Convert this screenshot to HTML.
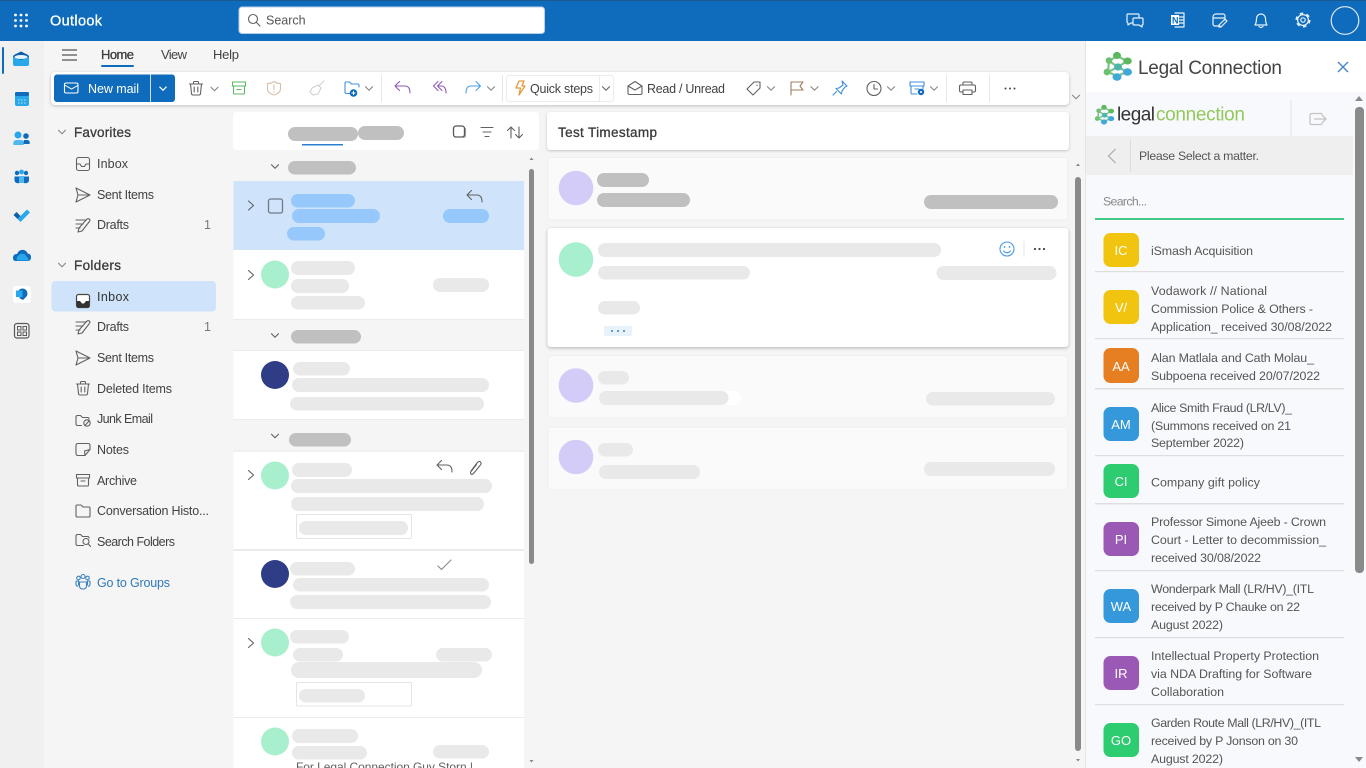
<!DOCTYPE html>
<html lang="en"><head><meta charset="utf-8"><title>Outlook</title>
<style>
html,body{margin:0;padding:0;width:1366px;height:768px;overflow:hidden;background:#f5f5f5}
svg.page{display:block;position:absolute;left:0;top:0;filter:blur(.35px)}
text{font-family:"Liberation Sans",sans-serif;font-size:12.5px;fill:#424242}
.s{fill:none;stroke:#616161;stroke-width:1.1;stroke-linecap:round;stroke-linejoin:round}
.g{fill:#c0c0c0}.l{fill:#e9e9e9}.b{fill:#96c8fb}
.t{font-size:12.4px;fill:#555}
.i{fill:#fff;font-size:13px;text-anchor:middle}
.sb{stroke:#3a3a3a;stroke-width:.3;fill:#3a3a3a}
</style></head><body>
<svg class="page" width="1366" height="768" viewBox="0 0 1366 768" xmlns="http://www.w3.org/2000/svg">
<defs>
<path id="chev" d="M-3.5-1.8 0 1.8 3.5-1.8"/>
<path id="chevr" d="M-2.5-4.5 2.5 0-2.5 4.5"/>
<path id="inbox" d="M-4.5-6.5h9a2 2 0 0 1 2 2v9a2 2 0 0 1-2 2h-9a2 2 0 0 1-2-2v-9a2 2 0 0 1 2-2zM-6.5 0H-3L-1.5 2.500H1.500L3 0H6.500"/>
<path id="sent" d="M-7-7 7 0-7 7-5 0ZM-5 0H7"/>
<path id="draft" d="M-7-5H3M-7-1H0M-7 3H-3M-5 7-4 3 4-6Q6-7 7-5 7-4 6-3L-1 6Z"/>
<path id="trash" d="M-6.500-4H6.500M-2.500-4V-5.500Q-2.500-6.500-1.500-6.500H1.500Q2.500-6.500 2.500-5.500V-4M-5.500-4-4.500 5.500Q-4.400 7-3 7H3Q4.400 7 4.500 5.500L5.500-4M-1.800-1V4M1.800-1V4"/>
<path id="folder" d="M-7-5Q-7-6-6-6H-2L0-4H6Q7-4 7-3V5Q7 6 6 6H-6Q-7 6-7 5Z"/>
<path id="reply" d="M-3.500-6.500-8-2-3.500 2.500M-8-2H2Q7-2 7 5"/>
<g id="logo">
<path d="M0-10-8-5-9 6 0 10 10 6 1 1 10-5 0-10M-8-5 1 1-9 6" fill="none" stroke="#7cc48a" stroke-width="2.200"/>
<ellipse cx="0" cy="-10.500" rx="4" ry="3.600" fill="#5cb85c"/><circle cx="-8" cy="-5.500" r="3.300" fill="#6cc070"/><ellipse cx="10.500" cy="-5" rx="4.300" ry="3.500" fill="#5cb85c"/>
<circle cx="-10" cy="6" r="3.400" fill="#6cc070"/><ellipse cx="1" cy="1" rx="4" ry="3.600" fill="#4db6ac"/><ellipse cx="10.500" cy="6" rx="4.500" ry="3.800" fill="#3fa9d8"/><ellipse cx="0" cy="11" rx="4.500" ry="3.800" fill="#3fa9d8"/>
</g>
</defs>

<!-- top bar -->
<rect width="1366" height="41" fill="#0f6cbd"/>
<rect width="1366" height="1" fill="#1b5a8e"/>
<g fill="#fff">
<circle cx="15.500" cy="15" r="1.400"/><circle cx="21" cy="15" r="1.400"/><circle cx="26.500" cy="15" r="1.400"/>
<circle cx="15.500" cy="20.500" r="1.400"/><circle cx="21" cy="20.500" r="1.400"/><circle cx="26.500" cy="20.500" r="1.400"/>
<circle cx="15.500" cy="26" r="1.400"/><circle cx="21" cy="26" r="1.400"/><circle cx="26.500" cy="26" r="1.400"/>
</g>
<text x="50" y="25.500" style="font-size:14.500px;fill:#fff;stroke:#fff;stroke-width:.3" textLength="52">Outlook</text>
<rect x="239" y="7" width="305.500" height="26.500" rx="3" fill="#fff" stroke="#b8cfe6"/>
<circle cx="253" cy="19" r="4.500" class="s"/><path d="M256.500 22.500 260 26" class="s"/>
<text x="266" y="24.500" style="font-size:12.500px;fill:#555">Search</text>
<g fill="none" stroke="#e8f1fa" stroke-width="1.200" stroke-linejoin="round" stroke-linecap="round">
<path d="M1128 14h10a1 1 0 0 1 1 1v2M1133 23h-2l-3 2v-2a1.500 1.500 0 0 1-1-1.500V15a1 1 0 0 1 1-1"/><path d="M1134 18h8a1 1 0 0 1 1 1v5a1 1 0 0 1-1 1v2l-3-2h-5a1 1 0 0 1-1-1v-5a1 1 0 0 1 1-1z"/>
<path d="M1175 13h9v14h-9M1179 17h5M1179 20h5M1179 23h5"/>
<path d="M1213 17v7a2 2 0 0 0 2 2h5M1213 17a3 3 0 0 1 3-3h7a2 2 0 0 1 2 2v4M1213 18h12M1219 25l6-6 2 2-6 6h-2z"/>
<path d="M1255 25q1.500-2.500 1.500-6.500a4.500 4.500 0 0 1 9 0q0 4 1.500 6.500zM1259 26.500q2 2 4 0"/>
<circle cx="1303" cy="20" r="5.400"/>
<circle cx="1303" cy="20" r="2.200"/>
<circle cx="1303" cy="20" r="6.700" stroke-width="1.700" stroke-dasharray="3.500 3.520" stroke-linecap="butt"/>
<circle cx="1345" cy="20.500" r="13.800" stroke="#dfeaf5"/>
</g>
<rect x="1171" y="15" width="8" height="10" fill="#fff"/>
<text x="1172" y="23.500" style="font-size:9px;font-weight:700;fill:#0f6cbd">N</text>

<!-- rail -->
<rect y="41" width="44" height="727" fill="#f0f0f0"/>
<rect x="2" y="47" width="2" height="27" rx="1" fill="#0f6cbd"/>
<path d="M13 57q0-2 3-3l5-2.500 5 2.500q3 1 3 3v7q0 2-2 2H15q-2 0-2-2z" fill="#28a8ea"/><path d="M13 57q0-2 3-3l5-2.500 5 2.500q3 1 3 3l-8 3z" fill="#0f5fa8"/><ellipse cx="21" cy="57" rx="6.500" ry="2" fill="#e8f3fb"/>
<rect x="15" y="92" width="14" height="14" rx="2" fill="#28a8ea"/><rect x="15" y="92" width="14" height="4" rx="1.500" fill="#0f6cbd"/><path d="M18 100h8M18 103h8" stroke="#bfe3f7" stroke-dasharray="1.500 1.500"/>
<circle cx="18" cy="135" r="3.500" fill="#28a8ea"/><circle cx="26" cy="136" r="2.800" fill="#0f6cbd"/><path d="M13.500 145q-1-5 3-5h4q5 0 3 5z" fill="#50b8ee"/><path d="M24 140h3q3.500 0 2.500 4h-6z" fill="#0f6cbd"/>
<circle cx="17" cy="173" r="2.200" fill="#0f6cbd"/><circle cx="21.500" cy="172" r="2.400" fill="#28a8ea"/><circle cx="26" cy="173" r="2.200" fill="#0f6cbd"/><path d="M14.500 176.500h5.500V183q-5.500 1-5.500-3z" fill="#0f6cbd"/><path d="M23.500 176.500H29v3.500q0 4-5.500 3z" fill="#0f6cbd"/><path d="M19 176h5v7h-5z" fill="#50b8ee"/>
<path d="M13.500 215l3-3 4 4-3 3z" fill="#0f5fa8"/><path d="M17.500 219l3-3 6.500-6.500 3 3-9.500 9.500z" fill="#28a8ea"/>
<path d="M13 258q0-4 4-4 2-5 7-4 3 1 3.500 3.500 3.500 0 3.500 4 0 3-3 3.500H16q-3 0-3-3z" fill="#0f6cbd"/><path d="M18 256q2-3 5-2 3 0 3.500 3 2 .5 2 3.500H17q-1-3 1-4.500z" fill="#28a8ea"/>
<rect x="13" y="286" width="18" height="17" rx="3" fill="#fff"/><circle cx="22.500" cy="293.500" r="5" fill="#0f6cbd"/><rect x="16" y="290.500" width="6.500" height="6.500" fill="#28a8ea"/><path d="M19 298l4 2 3-3z" fill="#0f6cbd"/>
<rect x="14.500" y="323.500" width="14.500" height="14.500" rx="2.500" fill="none" stroke="#5a5a5a" stroke-width="1.200"/><rect x="17.500" y="326.500" width="3.500" height="3.500" fill="none" stroke="#5a5a5a"/><rect x="23" y="326.500" width="3.500" height="3.500" fill="none" stroke="#5a5a5a"/><rect x="17.500" y="332" width="3.500" height="3.500" fill="none" stroke="#5a5a5a"/><rect x="23" y="332" width="3.500" height="3.500" fill="none" stroke="#5a5a5a"/>

<!-- ribbon -->
<path d="M62 50h15M62 55h15M62 60h15" stroke="#555" stroke-width="1.200"/>
<text x="101" y="59" class="sb" style="font-size:13px" textLength="33">Home</text>
<rect x="101" y="65" width="33" height="2" rx="1" fill="#0f6cbd"/>
<text x="161" y="59" style="font-size:13px" textLength="26">View</text><text x="213" y="59" style="font-size:13px" textLength="26">Help</text>
<rect x="51" y="72" width="1018" height="33" rx="4" fill="#fff" style="filter:drop-shadow(0 1px 1.500px rgba(0,0,0,.22))"/>
<rect x="54" y="74.500" width="121" height="27.500" rx="3" fill="#0f6cbd"/><rect x="150" y="74.500" width="1" height="27.500" fill="#cfe0f0"/>
<rect x="64.500" y="83" width="13.500" height="10" rx="1.500" fill="none" stroke="#fff" stroke-width="1.100"/><path d="M64.500 85l7 4 7-4" fill="none" stroke="#fff"/>
<text x="88" y="93" style="fill:#fff" textLength="51">New mail</text>
<use href="#chev" x="163" y="88.500" fill="none" stroke="#fff" stroke-width="1.200"/>
<g class="s" stroke-width="1.100">
<use href="#trash" x="196" y="88"/>
<use href="#chev" x="214.500" y="89" stroke="#888"/><use href="#chev" x="369" y="88.500" stroke="#888"/><use href="#chev" x="491" y="88.500" stroke="#888"/><use href="#chev" x="606" y="88.500" stroke="#666"/>
<use href="#chev" x="771" y="88.500" stroke="#888"/><use href="#chev" x="814.500" y="88.500" stroke="#888"/><use href="#chev" x="891" y="88.500" stroke="#888"/><use href="#chev" x="934" y="88.500" stroke="#888"/><use href="#chev" x="1076" y="97" stroke="#888"/>
<!-- archive -->
<path d="M232.500 82h13v4h-13zM233.500 86V93q0 1 1 1h9q1 0 1-1v-7M237 89.500h4" style="stroke:#5cb860"/>
<!-- shield -->
<path d="M274 81.500q3 2 6.500 2V89q0 4-6.500 6-6.500-2-6.500-6v-5.500q3.500 0 6.500-2zM274 85v4.500M274 91.500v.5" style="stroke:#dcbfa8"/>
<!-- broom -->
<path d="M324 81l-5 5M312 88l6-3 3 3-3 6-5 1-3-3z" style="stroke:#cfcfcf"/>
<!-- move -->
<path d="M345 83q0-1 1-1h3.500l2 2h6q1.500 0 1.500 1.500V87M345 83v9q0 1.500 1.500 1.500h4" style="stroke:#3d8fdc"/>
<!-- reply etc -->
<use href="#reply" x="403" y="88" style="stroke:#8e5bb5"/>
<path d="M438 81.500 433.500 86l4.500 4.500M442 81.500 437.500 86l4.500 4.500M437.500 86H441q5 0 5 7" style="stroke:#8e5bb5"/>
<path d="M476 81.500 480.500 86 476 90.500M480.500 86H471Q466 86 466 93" style="stroke:#4a9fe8"/>
<!-- read unread -->
<path d="M628 86l7-4.500 7 4.500v7q0 1.500-1.500 1.500h-11q-1.500 0-1.500-1.500zM628 86l7 4 7-4"/>
<!-- tag -->
<path d="M747 89l7-7h6v6l-7 7zM757 85v.500"/>
<!-- flag -->
<path d="M791 95V82h12l-3 4 3 4h-12" style="stroke:#a07c5c"/>
<!-- pin -->
<path d="M842 81l5 5-2 1-3 4-.500 3-5.500-5.500 3-.500 4-3zM836.500 91.500 833 95" style="stroke:#3d8fdc"/>
<!-- clock -->
<circle cx="874" cy="88.500" r="7"/><path d="M874 84.500v4.500h3.500"/>
<!-- box -->
<path d="M910 82h14v4h-14zM911 86v7q0 1 1 1h5M923 86v3M915 89h4" style="stroke:#3d8fdc"/>
<!-- print -->
<path d="M963 85v-2q0-1 1-1h7q1 0 1 1v2M963 92h-2q-1.500 0-1.500-1.500v-4q0-1.500 1.500-1.500h13q1.500 0 1.500 1.500v4q0 1.500-1.500 1.500h-2M963 90h9v4.500h-9z"/>
</g>
<circle cx="353.500" cy="93" r="3.800" fill="#0f6cbd"/><path d="M351.500 93h4M353.500 91v4" stroke="#fff"/>
<circle cx="921" cy="92" r="3.200" fill="#0f6cbd"/><circle cx="921" cy="92" r="1" fill="#fff"/>
<path d="M519 81h5l-2 5h3l-6 9 1.500-7H516z" fill="none" stroke="#e49a3a" stroke-width="1.300" stroke-linejoin="round"/>
<g fill="#e6e6e6"><rect x="381" y="75" width="1" height="27"/><rect x="502" y="75" width="1" height="27"/><rect x="946" y="75" width="1" height="27"/><rect x="989" y="75" width="1" height="27"/></g>
<rect x="506.500" y="75.500" width="107" height="26" rx="3" fill="none" stroke="#ececec"/><rect x="599" y="76" width="1" height="25" fill="#ececec"/>
<text x="530" y="93" textLength="63">Quick steps</text>
<text x="647" y="93" textLength="78">Read / Unread</text>
<g fill="#444"><circle cx="1005.500" cy="88.500" r="1"/><circle cx="1010" cy="88.500" r="1"/><circle cx="1014.500" cy="88.500" r="1"/></g>

<!-- folder pane -->
<g class="s" stroke-width="1.300"><use href="#chev" x="62" y="132" style="stroke:#888"/><use href="#chev" x="62" y="265" style="stroke:#888"/></g>
<text x="74" y="137" class="sb" style="font-size:13.500px" textLength="57">Favorites</text>
<text x="74" y="270" class="sb" style="font-size:13.500px" textLength="47">Folders</text>
<rect x="51.500" y="281" width="164.500" height="30.500" rx="4" fill="#cfe4fa"/>
<g class="s">
<use href="#inbox" x="83" y="164"/><use href="#sent" x="83" y="195"/><use href="#draft" x="83" y="225"/>
<use href="#draft" x="83" y="327"/><use href="#sent" x="83" y="358"/><use href="#trash" x="83" y="388"/>
<path d="M76 417q0-1.500 1.500-1.500h3l2 2h5q1.500 0 1.500 1.500M76 417v7q0 1.500 1.500 1.500h4"/><circle cx="87" cy="423" r="3.200"/><path d="M85 425.500l4.500-5"/>
<path d="M78 444h10q2 0 2 2v4l-5 6h-7q-2 0-2-2v-8q0-2 2-2zM85 456l-.500-4.500 5.500-1.500" transform="translate(0 -0.500)"/>
<path d="M76.500 474.500h13v3.500h-13zM77.500 478v7q0 1 1 1h9q1 0 1-1v-7M81 481h4"/>
<use href="#folder" x="83" y="511"/>
<path d="M76 536q0-1.500 1.500-1.500h3l2 2h5q1.500 0 1.500 1.500M76 536v8q0 1.500 1.500 1.500h6"/><circle cx="86" cy="541.500" r="3"/><path d="M88.200 543.800 90.500 546.500"/>
</g>
<path d="M76.500 296.500a2 2 0 0 1 2-2h9a2 2 0 0 1 2 2v9a2 2 0 0 1-2 2h-9a2 2 0 0 1-2-2z" fill="#fff" stroke="#444" stroke-width="1.200"/><path d="M77 301h3l2 2.500h2l2-2.500h3v5a1.500 1.500 0 0 1-1.500 1.500h-9A1.500 1.500 0 0 1 77 306z" fill="#333"/>
<g><text x="97" y="168" textLength="31">Inbox</text><text x="97" y="199" textLength="57">Sent Items</text><text x="97" y="229" textLength="32">Drafts</text><text x="204" y="229" style="fill:#777">1</text>
<text x="97" y="301" style="fill:#333" textLength="32">Inbox</text><text x="97" y="331" textLength="32">Drafts</text><text x="204" y="331" style="fill:#777">1</text><text x="97" y="362" textLength="57">Sent Items</text><text x="97" y="393" textLength="75">Deleted Items</text><text x="97" y="423" textLength="56">Junk Email</text><text x="97" y="454" textLength="32">Notes</text><text x="97" y="485" textLength="40">Archive</text><text x="97" y="515" textLength="112">Conversation Histo...</text><text x="97" y="546" textLength="78">Search Folders</text>
<text x="97" y="587" style="fill:#2f78b8" textLength="73">Go to Groups</text></g>
<g fill="none" stroke="#3f83bd" stroke-width="1.100"><circle cx="78.500" cy="578" r="1.800"/><circle cx="83" cy="576.500" r="2"/><circle cx="87.500" cy="578" r="1.800"/><path d="M79.500 582h7v4q0 3-3.500 3t-3.500-3zM76 581h2.500v4.500M90 581h-2.500v4.500M76 581v3q0 2 2 2.500M90 581v3q0 2-2 2.500"/></g>

<!-- message list -->
<rect x="233" y="112" width="306" height="38" rx="3" fill="#fff"/>
<rect x="288" y="127" width="70" height="14" rx="7" class="g"/><rect x="358" y="126" width="46" height="14" rx="7" class="g"/>
<rect x="302" y="144" width="41" height="1.500" fill="#2b7cd3"/>
<g class="s"><rect x="453.500" y="126" width="11" height="11" rx="2.500" style="stroke:#555;stroke-width:1.300"/><path d="M465.500 128.500v6.500q0 2.500-2.500 2.500H455.500" style="stroke:#999"/><path d="M481 127.500h12M483 132h8M485 136.500h4"/><path d="M511 138v-11M507.500 130.500 511 127l3.500 3.500M519 127v11M515.500 134.500 519 138l3.500-3.500"/></g>
<rect x="233.500" y="181" width="290.500" height="69" fill="#cfe4fa"/>
<rect x="233.500" y="250" width="290.500" height="69" fill="#fff"/>
<rect x="233.500" y="351" width="290.500" height="68" fill="#fff"/>
<rect x="233.500" y="452" width="290.500" height="97" fill="#fff"/>
<rect x="233.500" y="551" width="290.500" height="67" fill="#fff"/>
<rect x="233.500" y="619" width="290.500" height="98" fill="#fff"/>
<rect x="233.500" y="718" width="290.500" height="50" fill="#fff"/>
<g fill="#ebebeb"><rect x="233.500" y="319" width="290.500" height="1"/><rect x="233.500" y="350" width="290.500" height="1"/><rect x="233.500" y="419" width="290.500" height="1"/><rect x="233.500" y="450.500" width="290.500" height="1"/><rect x="233.500" y="549" width="290.500" height="2"/><rect x="233.500" y="618" width="290.500" height="1"/><rect x="233.500" y="717" width="290.500" height="1"/></g>
<g class="s" stroke-width="1.100">
<use href="#chev" x="275" y="166.500"/><use href="#chev" x="275" y="335.500"/><use href="#chev" x="275" y="436"/>
<use href="#chevr" x="251" y="205.500"/><use href="#chevr" x="251" y="275"/><use href="#chevr" x="251" y="475"/><use href="#chevr" x="251" y="643"/>
<rect x="268.500" y="199" width="14" height="14" rx="2" style="stroke:#6f7a86;stroke-width:1.300"/>
<use href="#reply" x="475" y="197"/><use href="#reply" x="445" y="467"/>
<path d="M471 473l6-8q2-2.500 3.500-1t-.500 3.500l-6.500 8q-1.500 1.500-2.500.500t0-2.500l5.500-7" transform="translate(0 -2)"/>
<path d="M438 566l3.500 3.500L451 560" style="stroke:#888"/>
</g>
<g class="g"><rect x="288" y="161" width="68" height="13.500" rx="6.700"/><rect x="291" y="330" width="70" height="13.500" rx="6.700"/><rect x="289" y="433" width="62" height="13.500" rx="6.700"/></g>
<g class="b"><rect x="291" y="194" width="64" height="13.500" rx="6.700"/><rect x="292" y="209" width="88" height="14" rx="7"/><rect x="443" y="209" width="46" height="14" rx="7"/><rect x="287" y="227" width="38" height="13.500" rx="6.700"/></g>
<g fill="#a8f0cd"><circle cx="275" cy="274.500" r="14"/><circle cx="275" cy="475.500" r="14"/><circle cx="275" cy="642.500" r="14"/><circle cx="275" cy="741.500" r="14"/></g>
<g fill="#2e3d85"><circle cx="275" cy="375" r="14"/><circle cx="275" cy="574" r="14"/></g>
<g class="l">
<rect x="291" y="261" width="64" height="14" rx="7"/><rect x="291" y="279" width="58" height="14" rx="7"/><rect x="291" y="296" width="74" height="13.500" rx="6.700"/><rect x="433" y="278" width="56" height="14" rx="7"/>
<rect x="293" y="362" width="57" height="13.500" rx="6.700"/><rect x="292" y="378" width="197" height="14" rx="7"/><rect x="290" y="397" width="194" height="13.500" rx="6.700"/>
<rect x="292" y="463" width="60" height="14" rx="7"/><rect x="291" y="479" width="201" height="14" rx="7"/><rect x="291" y="497" width="193" height="14" rx="7"/><rect x="299" y="521" width="109" height="14" rx="7"/>
<rect x="290" y="562" width="65" height="13.500" rx="6.700"/><rect x="293" y="578" width="196" height="13.500" rx="6.700"/><rect x="290" y="595" width="201" height="14" rx="7"/>
<rect x="290" y="630" width="59" height="13.500" rx="6.700"/><rect x="293" y="648" width="50" height="13.500" rx="6.700"/><rect x="436" y="648" width="56" height="13.500" rx="6.700"/><rect x="291" y="662" width="191" height="16" rx="8"/><rect x="299" y="689" width="66" height="13.500" rx="6.700"/>
<rect x="292" y="729" width="66" height="14" rx="7"/><rect x="292" y="746" width="75" height="13.500" rx="6.700"/><rect x="433" y="745" width="56" height="13.500" rx="6.700"/>
</g>
<g fill="none" stroke="#e4e4e4"><rect x="296.500" y="514.500" width="115" height="24" rx="1"/><rect x="296.500" y="682.500" width="115" height="23.500" rx="1"/></g>
<text x="296" y="771" style="font-size:12px;fill:#616161" textLength="177">For Legal Connection Guy Storn |</text>
<rect x="529" y="169" width="5" height="395" rx="2.500" fill="#8a8a8a"/>
<path d="M529.500 160l2-2.500 2 2.500zM529.500 760l2 2.500 2-2.500z" fill="#888"/>

<!-- reading pane -->
<rect x="547" y="112" width="522" height="38" rx="3" fill="#fff" style="filter:drop-shadow(0 1px 1.200px rgba(0,0,0,.2))"/>
<text x="558" y="137" class="sb" style="font-size:13.500px" textLength="99">Test Timestamp</text>
<g fill="#fafafa" stroke="#efefef"><rect x="548" y="157.500" width="519.500" height="62.500" rx="3"/><rect x="548" y="355.500" width="519.500" height="62.500" rx="3"/><rect x="548" y="427" width="519.500" height="63" rx="3"/></g>
<rect x="547.500" y="228" width="521" height="119" rx="3" fill="#fff" style="filter:drop-shadow(0 1px 1.500px rgba(0,0,0,.28))"/>
<g fill="#d4ccf8"><circle cx="576" cy="188" r="17.300"/><circle cx="576" cy="385.500" r="17.300"/><circle cx="576" cy="457" r="17.300"/></g>
<circle cx="576" cy="259.500" r="17.300" fill="#a8f0cd"/>
<g class="g"><rect x="597" y="173" width="52" height="14" rx="7"/><rect x="597" y="193" width="93" height="14" rx="7"/><rect x="924" y="195" width="134" height="14" rx="7"/></g>
<rect x="700" y="391" width="41" height="14" rx="7" fill="#fff"/>
<g class="l">
<rect x="598" y="243" width="343" height="14" rx="7"/><rect x="598" y="266" width="152" height="13.500" rx="6.700"/><rect x="936.500" y="266" width="120" height="14" rx="7"/><rect x="598" y="301" width="42" height="13.500" rx="6.700"/>
<rect x="598" y="371" width="31" height="13.500" rx="6.700"/><rect x="599" y="391" width="129.500" height="14" rx="7"/><rect x="926" y="392" width="129" height="13.500" rx="6.700"/>
<rect x="598" y="443" width="35" height="13.500" rx="6.700"/><rect x="599" y="465" width="101" height="14" rx="7"/><rect x="924" y="462" width="131" height="14" rx="7"/>
</g>
<rect x="604" y="326" width="28" height="10" rx="1.500" fill="#e8f2fb"/>
<g fill="#3f7fb8"><circle cx="612" cy="331" r="1"/><circle cx="618" cy="331" r="1"/><circle cx="624" cy="331" r="1"/></g>
<g fill="none" stroke="#4a9be0" stroke-width="1.100"><circle cx="1007" cy="249" r="7"/><path d="M1003.500 251q3.500 3.500 7 0" stroke-linecap="round"/></g>
<g fill="#4a9be0"><circle cx="1004.500" cy="247" r=".9"/><circle cx="1009.500" cy="247" r=".9"/></g>
<rect x="1023.500" y="241" width="1" height="16" fill="#e6e6e6"/>
<g fill="#444"><circle cx="1035" cy="249" r="1.100"/><circle cx="1039.500" cy="249" r="1.100"/><circle cx="1044" cy="249" r="1.100"/></g>
<rect x="1075" y="177" width="6" height="574" rx="3" fill="#8a8a8a"/>
<path d="M1076 166l2-2.500 2 2.500zM1076 759l2 2.500 2-2.500z" fill="#888"/>

<!-- add-in panel -->
<rect x="1085" y="41" width="281" height="727" fill="#fff"/><rect x="1085" y="41" width="1" height="727" fill="#e4e4e4"/>
<rect x="1086" y="92" width="280" height="676" fill="#f8f9fd"/>
<use href="#logo" x="1117" y="66"/>
<text x="1138" y="74" style="font-size:19px;fill:#444" textLength="144">Legal Connection</text>
<path d="M1338 62l10 10M1348 62l-10 10" stroke="#3f83c9" stroke-width="1.300"/>
<use href="#logo" transform="translate(1104 114.500) scale(.68)"/>
<text x="1117" y="120.500" style="font-size:19px;fill:#333" textLength="38">legal</text>
<text x="1156" y="120.500" style="font-size:19px;fill:#93c95a" textLength="89">connection</text>
<rect x="1290.500" y="100" width="1" height="36" fill="#e2e2e2"/>
<path d="M1322 113.500h-10.500a1.500 1.500 0 0 0-1.500 1.500v8a1.500 1.500 0 0 0 1.500 1.500H1322M1322 113.500v2M1322 124.500v-2M1314 119h11.500M1322.500 115.500l3.500 3.500-3.500 3.500" fill="none" stroke="#c4c4c4" stroke-width="1.300"/>
<rect x="1086" y="136" width="267" height="39" fill="#efefef"/>
<path d="M1115.500 149l-7 7 7 7" fill="none" stroke="#aaa" stroke-width="1.200"/>
<rect x="1130" y="139" width="1" height="33" fill="#dcdcdc"/>
<text x="1139" y="160" style="font-size:12.300px;fill:#555" textLength="120">Please Select a matter.</text>
<text x="1103" y="205.500" style="font-size:12.300px;fill:#888" textLength="44">Search...</text>
<rect x="1095" y="218" width="249" height="2" fill="#42c98a"/>
<path d="M1355 101l4-5 4 5zM1355 757l4 5 4-5z" fill="#8a8a8a"/>
<rect x="1355" y="107" width="9" height="466" rx="4" fill="#8a8a8a"/>

<g fill="#f1c40f"><rect x="1103.500" y="233" width="35.500" height="34" rx="7"/><rect x="1103.500" y="290" width="35.500" height="34" rx="7"/></g>
<rect x="1103.500" y="348" width="35.500" height="35" rx="7" fill="#e67e22"/>
<g fill="#3498db"><rect x="1103.500" y="407" width="35.500" height="34" rx="7"/><rect x="1103.500" y="589" width="35.500" height="34" rx="7"/></g>
<g fill="#2ecc71"><rect x="1103.500" y="464" width="35.500" height="34" rx="7"/><rect x="1103.500" y="723" width="35.500" height="34" rx="7"/></g>
<g fill="#9b59b6"><rect x="1103.500" y="522" width="35.500" height="34" rx="7"/><rect x="1103.500" y="656" width="35.500" height="34" rx="7"/></g>
<text class="i" x="1121" y="255">IC</text><text class="i" x="1121" y="312">V/</text><text class="i" x="1121" y="371">AA</text><text class="i" x="1121" y="429">AM</text><text class="i" x="1121" y="486">CI</text><text class="i" x="1121" y="544">PI</text><text class="i" x="1121" y="611">WA</text><text class="i" x="1121" y="678">IR</text><text class="i" x="1121" y="745">GO</text>
<g fill="#dedede"><rect x="1095" y="271" width="249" height="1.200"/><rect x="1095" y="338" width="249" height="1.200"/><rect x="1095" y="388" width="249" height="1.500"/><rect x="1095" y="455" width="249" height="1.200"/><rect x="1095" y="503" width="249" height="1.500"/><rect x="1095" y="570" width="249" height="1.200"/><rect x="1095" y="637" width="249" height="1.200"/><rect x="1095" y="704" width="249" height="1.200"/></g>
<g>
<text class="t" x="1151" y="255" textLength="102">iSmash Acquisition</text>
<text class="t" x="1151" y="295" textLength="116">Vodawork // National</text>
<text class="t" x="1151" y="313" textLength="162">Commission Police &amp; Others -</text>
<text class="t" x="1151" y="331" textLength="181">Application_ received 30/08/2022</text>
<text class="t" x="1151" y="362" textLength="163">Alan Matlala and Cath Molau_</text>
<text class="t" x="1151" y="380" textLength="169">Subpoena received 20/07/2022</text>
<text class="t" x="1151" y="412" textLength="141">Alice Smith Fraud (LR/LV)_</text>
<text class="t" x="1151" y="430" textLength="140">(Summons received on 21</text>
<text class="t" x="1151" y="447" textLength="93">September 2022)</text>
<text class="t" x="1151" y="486.500" textLength="109">Company gift policy</text>
<text class="t" x="1151" y="526" textLength="175">Professor Simone Ajeeb - Crown</text>
<text class="t" x="1151" y="544" textLength="175">Court - Letter to decommission_</text>
<text class="t" x="1151" y="562" textLength="110">received 30/08/2022</text>
<text class="t" x="1151" y="593" textLength="163">Wonderpark Mall (LR/HV)_(ITL</text>
<text class="t" x="1151" y="611" textLength="149">received by P Chauke on 22</text>
<text class="t" x="1151" y="629" textLength="72">August 2022)</text>
<text class="t" x="1151" y="660" textLength="168">Intellectual Property Protection</text>
<text class="t" x="1151" y="678" textLength="161">via NDA Drafting for Software</text>
<text class="t" x="1151" y="696" textLength="73">Collaboration</text>
<text class="t" x="1151" y="727" textLength="170">Garden Route Mall (LR/HV)_(ITL</text>
<text class="t" x="1151" y="745" textLength="147">received by P Jonson on 30</text>
<text class="t" x="1151" y="763" textLength="72">August 2022)</text>
</g>
</svg>
</body></html>
